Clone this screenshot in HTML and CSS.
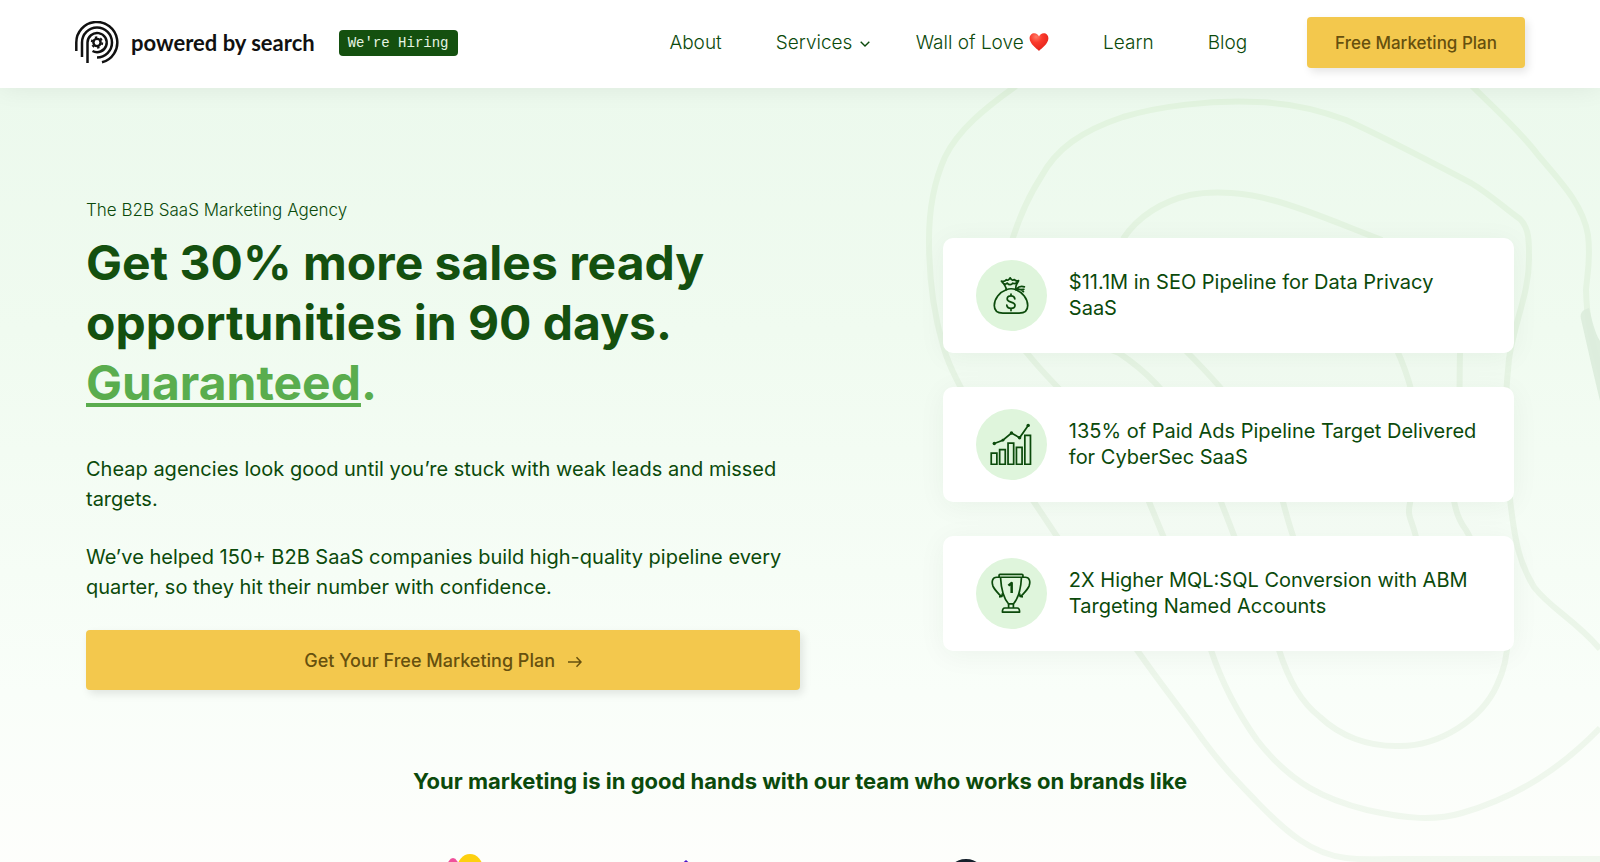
FILE: index.html
```html
<!DOCTYPE html>
<html lang="en">
<head>
    <meta charset="UTF-8">
    <meta name="viewport" content="width=device-width, initial-scale=1.0">
    <title>Powered by Search</title>
    <link rel="stylesheet" href="styles.css">
</head>
<body>
    <header class="header">
        <a class="logo" href="#">
            <svg class="logo-mark" viewBox="0 0 44 44" fill="none" stroke="#111" stroke-width="2.5">
                <path d="M1.3 30V21.5A20.5 20.5 0 1 1 27 41.3"/>
                <path d="M7 36V21.5A15 15 0 1 1 22 36.5"/>
                <path d="M12.5 42V21.5A9.6 9.6 0 1 1 17.5 30"/>
                <circle cx="22" cy="21.5" r="3.6" stroke-width="2.4"/>
                <circle cx="22" cy="21.5" r="5.3" stroke-width="1.8" stroke-dasharray="2.4 3.15"/>
            </svg>
            <span class="logo-text">powered by search</span>
        </a>
        <a class="hiring" href="#">We're Hiring</a>
        <nav class="nav">
            <a href="#">About</a>
            <a href="#">Services
                <svg class="chevron" viewBox="0 0 10 6" fill="none" stroke="#0b4a0b" stroke-width="1.4"><path d="M.7.7 5 5 9.300.7"/></svg>
            </a>
            <a href="#">Wall of Love
                <svg class="heart" viewBox="0 0 20 18">
                    <defs>
                        <radialGradient id="heart-fill" cx=".35" cy=".2" r=".8">
                            <stop offset="0" stop-color="#ff7a66"/>
                            <stop offset=".4" stop-color="#fb3a2c"/>
                            <stop offset="1" stop-color="#e3221a"/>
                        </radialGradient>
                    </defs>
                    <path fill="url(#heart-fill)" d="M10 18C7.500 15.500.8 11 .6 5.600.5 2.300 2.700.3 5.300.3 7.500.3 9.200 1.600 10 3.500 10.800 1.600 12.500.3 14.700.3c2.600 0 4.800 2 4.700 5.300C19.200 11 12.500 15.500 10 18z"/>
                </svg>
            </a>
            <a href="#">Learn</a>
            <a href="#">Blog</a>
        </nav>
        <button class="btn btn-small" type="button">Free Marketing Plan</button>
    </header>

    <main class="hero">
        <svg class="contours" viewBox="0 0 700 774" fill="none">
            <defs>
                <linearGradient id="contour-fade" gradientUnits="userSpaceOnUse" x1="0" y1="0" x2="0" y2="774">
                    <stop offset="0" stop-color="#e2f4df"/>
                    <stop offset=".5" stop-color="#e7f4e5"/>
                    <stop offset="1" stop-color="#f1f8ef"/>
                </linearGradient>
            </defs>
            <g stroke="url(#contour-fade)" stroke-width="6">
                <path d="M116-2C85 20 58 42 45 69 32 98 29 125 29 152c0 40 5 75 14 105 8 32 35 75 91 157l22 33c35 50 55 80 81 115 28 40 45 60 66 90 20 27 33 40 54 62 30 31 55 52 89 56 15 2 30 1 45 1h209"/>
                <path d="M106 174c10-40 22-65 35-85 15-28 40-46 82-60C260 18 310 12 357 14c35 1 62 8 89 18 40 18 85 42 125 63 20 12 32 24 49 36 10 10 9 26 9 40 0 35-14 60-20 100-5 50-6 85 1 140 5 45 10 65 24 88 17 22 40 32 66 62"/>
                <path d="M106 174c-8 50 0 70 21 91 40 50 85 80 113 127 25 60 45 110 71 170 12 36 26 62 46 90 35 45 70 60 110 70 40 9 68 11 95 3 58-17 100-46 138-85"/>
                <path d="M119 151c-2 50 20 85 100 114 60 40 80 90 102 149 20 50 35 95 58 148 10 31 22 52 41 67 20 19 48 30 80 29 40 0 82-27 97-61 14-30 14-60 0-95-12-26-20-40-31-60-16-21-15-50-11-82 6-40 4-55 5-95"/>
                <path d="M223 151c15-23 40-38 67-44 25-5 58-2 82 5 35 9 70 25 110 40"/>
                <path d="M286 263c45 45 75 80 97 151 12 45 20 70 45 85 40 20 92 0 88-50-5-20-9-20-6-34 10-40 16-90-14-155"/>
                <path d="M572-2c25 25 48 45 66 69 24 28 45 50 50 80 3 25-1 40-2 55 1 35 6 50 16 88"/>
            </g>
            <path d="M684 222c-3 2-4 5-3 9l10 44 9 38v-60c-6-10-8-22-11-33z" fill="#dcecdb" fill-opacity=".9"/>
        </svg>

        <div class="hero-row">
            <section class="intro">
                <p class="eyebrow">The B2B SaaS Marketing Agency</p>
                <h1>Get 30% more sales ready opportunities in 90 days. <span class="accent"><u>Guaranteed</u>.</span></h1>
                <p class="lead">Cheap agencies look good until you’re stuck with weak leads and missed targets.</p>
                <p class="lead">We’ve helped 150+ B2B SaaS companies build high-quality pipeline every quarter, so they hit their number with confidence.</p>
                <button class="btn btn-large" type="button">
                    Get Your Free Marketing Plan
                    <svg class="arrow" viewBox="0 0 14 12" fill="none" stroke="#66500e" stroke-width="1.5"><path d="M0 6h13M8.500 1.300 13 6l-4.500 4.700"/></svg>
                </button>
            </section>

            <ul class="results">
                <li class="card">
                    <span class="card-icon">
                        <svg viewBox="0 0 44 44" fill="none" stroke="#0b4a0b" stroke-width="1.8" stroke-linecap="round" stroke-linejoin="round">
                            <path d="M17 16.500C10 19 4.500 26 4.500 33c0 5.500 3.500 8 9 8h17c5.500 0 9-2.500 9-8 0-7-5.500-14-12.500-16.500"/>
                            <path d="M17 16.500c3-1.300 7-1.300 10.500 0M17 16.500c0-3-1.200-5-5-9 2 .6 3.800.2 5-1.500 1.500 1 2.500.5 4-2 1.600 2.500 3 3 4.600 1.800.9 1.400 2.300 1.900 4.400 1.200-2.500 3.500-3.500 6-3 9.500M13 9c2.500 2 4 2 5 .5 2 2.300 4.500 2 6 0 1.200 1 2.500.8 4.500-1"/>
                            <path d="M27.500 16c2-2.500 5-3.500 8.500-2.500M28 16.500c3-.8 5.300 0 7 2M27.500 16.500l8-.5"/>
                            <path d="M26 26c-.3-2-1.900-3-4-3-2.400 0-4 1.200-4 3.200 0 4.300 8.200 2.300 8.200 6.600 0 2-1.800 3.200-4.200 3.200s-4.200-1.200-4.400-3.400M22 21v2M22 36v2.300"/>
                        </svg>
                    </span>
                    <p>$11.1M in SEO Pipeline for Data Privacy SaaS</p>
                </li>
                <li class="card">
                    <span class="card-icon">
                        <svg viewBox="0 0 44 44" fill="none" stroke="#0b4a0b" stroke-width="1.8">
                            <path d="M1.300 31.500h5.900v11.700H1.300zM10.100 28h5.900v15.200h-5.900zM18.900 21h5.900v22.200h-5.900zM27.700 25.500h5.900v17.700h-5.900zM36.500 13h5.900v30.200h-5.900z"/>
                            <path d="M4.500 21.500l9-3.500 9-7.500 8.500 5L40 2.500"/>
                            <g fill="#0b4a0b" stroke="none">
                                <circle cx="4.500" cy="21.500" r="1.800"/>
                                <circle cx="13.500" cy="18" r="1.500"/>
                                <circle cx="22.500" cy="10.500" r="1.800"/>
                                <circle cx="31" cy="15.500" r="1.800"/>
                                <circle cx="40" cy="2.500" r="1.800"/>
                            </g>
                        </svg>
                    </span>
                    <p>135% of Paid Ads Pipeline Target Delivered for CyberSec SaaS</p>
                </li>
                <li class="card">
                    <span class="card-icon">
                        <svg viewBox="0 0 44 44" fill="none" stroke="#0b4a0b" stroke-width="1.8" stroke-linejoin="round">
                            <path d="M10.500 2.500h23a1 1 0 0 1 1 1v2h-25v-2a1 1 0 0 1 1-1zM11 5.500c.8 14 3.500 22.500 8.500 28h5c5-5.500 7.700-14 8.500-28"/>
                            <path d="M10.500 5.500H7c-4.500 0-5.500 4.500-4 9 1.500 4 5.500 7.500 9 11.500M33.500 5.500H37c4.500 0 5.500 4.500 4 9-1.500 4-5.500 7.500-9 11.500M9.500 26l3-.5.500-3M34.500 26l-3-.5-.5-3"/>
                            <path d="M19.500 33.500v4.200h5v-4.200M15.500 37.700h13q2.500 0 2.500 4.300H13q0-4.300 2.500-4.300z"/>
                            <path d="M19.300 14.300l3.400-2.800V22" stroke-width="2.600"/>
                        </svg>
                    </span>
                    <p>2X Higher MQL:SQL Conversion with ABM Targeting Named Accounts</p>
                </li>
            </ul>
        </div>

        <h2>Your marketing is in good hands with our team who works on brands like</h2>

        <div class="brands">
            <svg class="brand" viewBox="0 0 40 40">
                <ellipse cx="7" cy="15" rx="6" ry="11" fill="#f0509b"/>
                <ellipse cx="24" cy="15" rx="13" ry="15" fill="#fdd00f"/>
            </svg>
            <svg class="brand" viewBox="0 0 40 40">
                <path d="M20 6l16 14-16 14L4 20z" fill="#4a14c8"/>
            </svg>
            <svg class="brand" viewBox="0 0 40 40">
                <circle cx="20" cy="25" r="18" fill="none" stroke="#15202b" stroke-width="4"/>
            </svg>
        </div>
    </main>
</body>
</html>
```
FILE: styles.css
```css
:root {
    --dark-green: #0b4a0b;
    --green: #5aad4e;
    --yellow: #f3c84d;
    --brown: #66500e;
}

* {
    margin: 0;
    padding: 0;
    box-sizing: border-box;
}

body {
    font-family: Inter, 'Liberation Sans', sans-serif;
    font-weight: 300;
    color: var(--dark-green);
    background-color: white;
}

a {
    color: inherit;
    text-decoration: none;
}

/* Header */
.header {
    position: relative;
    z-index: 2;
    display: flex;
    align-items: center;
    height: 88px;
    padding: 0 75px 3px;
    background-color: white;
    box-shadow: 0 0 24px rgba(0, 0, 0, 0.07);
}

.logo {
    display: flex;
    align-items: center;
    gap: 12px;
    color: #111;
}

.logo-mark {
    width: 44px;
    height: 44px;
}

.logo-text {
    font-family: Lato, sans-serif;
    font-size: 22px;
    font-weight: 700;
}

.hiring {
    margin-left: 24px;
    padding: 0 9px;
    border-radius: 4px;
    background-color: #14500f;
    color: #e6f5e3;
    font-family: 'Liberation Mono', monospace;
    font-size: 14px;
    font-weight: 400;
    line-height: 26px;
}

.nav {
    display: flex;
    gap: 54px;
    margin-left: auto;
    font-size: 19px;
}

.chevron {
    width: 10px;
    height: 6px;
    margin: 0 -8px 0 2px;
    vertical-align: middle;
}

.heart {
    width: 20px;
    height: 18px;
    vertical-align: -2px;
}

.btn {
    border: none;
    border-radius: 4px;
    background-color: var(--yellow);
    box-shadow: 3px 4px 8px rgba(0, 0, 0, 0.1);
    color: var(--brown);
    font-family: inherit;
    font-weight: 500;
    cursor: pointer;
}

.btn-small {
    height: 51px;
    margin-left: 60px;
    padding: 0 28px;
    font-size: 17px;
}

.btn-large {
    width: 100%;
    height: 60px;
    font-size: 18px;
}

.arrow {
    width: 14px;
    height: 12px;
    margin-left: 8px;
    vertical-align: -1px;
}

/* Hero */
.hero {
    position: relative;
    overflow: hidden;
    padding: 110px 86px 0;
    background: linear-gradient(#ecf9ed, #f0fbf0 30%, #f9fef9 75%, #fefefc);
}

.contours {
    position: absolute;
    top: 0;
    right: 0;
    width: 700px;
    height: 774px;
}

.hero-row {
    position: relative;
    display: flex;
    align-items: center;
    justify-content: space-between;
}

.intro {
    width: 50%;
}

.eyebrow {
    margin-bottom: 11px;
    font-size: 17px;
    line-height: 24px;
}

h1 {
    margin-bottom: 41px;
    color: #14500f;
    font-size: 48px;
    font-weight: 700;
    line-height: 60px;
}

.accent {
    display: block;
    color: var(--green);
}

.accent u {
    text-decoration-thickness: 4px;
    text-underline-offset: 3px;
    text-decoration-skip-ink: none;
}

.lead {
    margin-bottom: 28px;
    font-size: 20px;
    font-weight: 400;
    line-height: 30px;
}

.results {
    display: flex;
    flex-direction: column;
    gap: 34px;
    width: 40%;
    list-style: none;
}

.card {
    display: flex;
    align-items: center;
    gap: 22px;
    padding: 22px 36px 22px 33px;
    border-radius: 10px;
    background-color: white;
    box-shadow: 0 4px 28px rgba(0, 60, 0, 0.05);
    font-size: 20px;
    font-weight: 400;
    line-height: 26px;
}

.card-icon {
    display: flex;
    flex-shrink: 0;
    align-items: center;
    justify-content: center;
    width: 71px;
    height: 71px;
    border-radius: 50%;
    background-color: #dff5dc;
}

.card-icon svg {
    width: 42px;
    height: 42px;
}

h2 {
    position: relative;
    margin-top: 76px;
    font-size: 22px;
    font-weight: 700;
    line-height: 30px;
    text-align: center;
}

.brands {
    position: relative;
    display: grid;
    grid-template-columns: 220px 220px 340px;
    justify-items: center;
    max-width: 888px;
    margin: 58px auto 0;
}

.brand {
    width: 40px;
    height: 40px;
}

@media (max-width: 1100px) {
    .header {
        flex-wrap: wrap;
        gap: 16px;
        height: auto;
        padding: 16px 24px;
    }

    .hero {
        padding: 48px 24px 0;
    }

    .hero-row {
        flex-direction: column;
        gap: 48px;
    }

    .intro,
    .results {
        width: 100%;
    }
}
```
